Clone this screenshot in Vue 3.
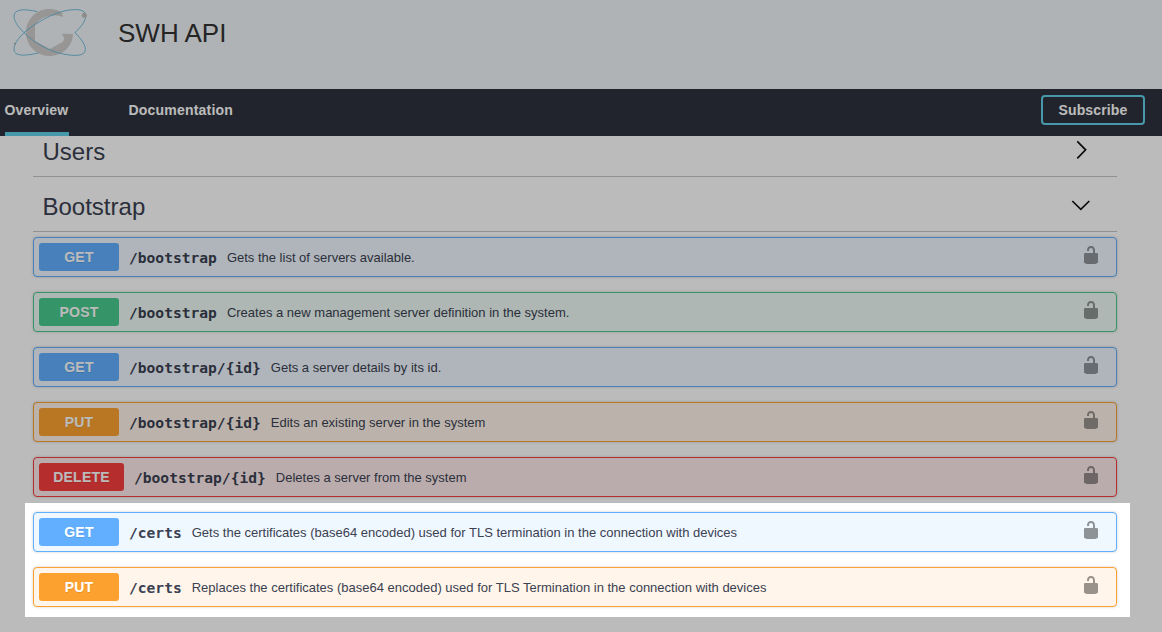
<script setup>
const operations = [
  { method: 'GET', path: '/bootstrap', text: 'Gets the list of servers available.' },
  { method: 'POST', path: '/bootstrap', text: 'Creates a new management server definition in the system.' },
  { method: 'GET', path: '/bootstrap/{id}', text: 'Gets a server details by its id.' },
  { method: 'PUT', path: '/bootstrap/{id}', text: 'Edits an existing server in the system' },
  { method: 'DELETE', path: '/bootstrap/{id}', text: 'Deletes a server from the system' },
  { method: 'GET', path: '/certs', text: 'Gets the certificates (base64 encoded) used for TLS termination in the connection with devices' },
  { method: 'PUT', path: '/certs', text: 'Replaces the certificates (base64 encoded) used for TLS Termination in the connection with devices' },
]
</script>

<template>
  <div class="page">
    <header class="top">
      <svg class="logo" viewBox="0 0 270 180" aria-hidden="true">
        <path fill="#cfcdcb" d="M189 51C181 47 166 45 150 47C132 50 116 59 105 75V122L149 147L189 125L193 115L185 101L219 102C218 140 187 168 148 168C108 168 78 136 78 97C78 58 109 27 148 27C163 27 177 31 187 39Z" />
        <g fill="none" stroke="#69b8d8" stroke-width="2.8">
          <path d="M115 159C75 168 42 170 42 147C42 134 52 118 72 98C100 74 155 39 202 31C235 26 257 29 257 47C257 62 246 78 225 98" />
          <path d="M112 35C76 26 42 26 42 48C42 61 51 78 72 98C101 127 148 155 190 162C226 169 256 169 256 148C256 135 246 119 225 98" />
        </g>
        <circle cx="253" cy="46" r="7.5" fill="#c2bfbe" />
        <circle cx="45" cy="131" r="3.5" fill="#b5b5b5" />
      </svg>
      <h1>SWH API</h1>
    </header>
    <nav class="bar">
      <a class="tab active">Overview</a>
      <a class="tab">Documentation</a>
      <button class="subscribe">Subscribe</button>
    </nav>
    <main>
      <h2 class="users">Users
        <svg width="20" height="20" viewBox="0 0 20 20"><path d="M6.3 1.3L14.6 9.8L6.3 18.3" /></svg>
      </h2>
      <h2 class="bootstrap">Bootstrap
        <svg width="20" height="20" viewBox="0 0 20 20"><path d="M1.3 6L9.8 14.3L18.3 6" /></svg>
      </h2>
      <div class="ops">
        <div v-for="(op, i) in operations" :key="i" class="op" :class="op.method.toLowerCase()">
          <span class="method">{{ op.method }}</span>
          <span class="path">{{ op.path }}</span>
          <span class="text">{{ op.text }}</span>
          <svg class="lock" width="20" height="20" viewBox="0 0 20 20">
            <path d="M15.8 8H14V5.6C14 2.703 12.665 1 10 1 7.334 1 6 2.703 6 5.6V6h2v-.801C8 3.754 8.797 3 10 3c1.203 0 2 .754 2 2.199V8H4c-.553 0-1 .646-1 1.199V17c0 .549.428 1.139.951 1.307l1.197.387C5.672 18.861 6.55 19 7.1 19h5.8c.549 0 1.428-.139 1.951-.307l1.196-.387c.524-.167.953-.757.953-1.306V9.199C17 8.646 16.352 8 15.8 8z" />
          </svg>
        </div>
      </div>
    </main>
    <div class="spotlight"></div>
  </div>
</template>

<style>
body { margin: 0; overflow: hidden; }
</style>

<style scoped>
.page {
  position: relative;
  width: 1162px;
  height: 632px;
  overflow: hidden;
  background: #fff;
  color: #3b4151;
  font-family: "Liberation Sans", Arial, sans-serif;
}
.top {
  display: flex;
  height: 89px;
  background: #f0f5f9;
}
.logo { width: 90px; height: 60px; margin-right: 28px; }
h1 {
  margin: 0;
  font-size: 26px;
  font-weight: 400;
  line-height: 66px;
  color: #333;
}
.bar {
  display: flex;
  align-items: flex-start;
  height: 47px;
  padding: 0 17px 0 5px;
  box-sizing: border-box;
  background: #2e323d;
  font-size: 14px;
  font-weight: 700;
  color: #fff;
}
.tab {
  height: 47px;
  box-sizing: border-box;
  margin-right: 60px;
  line-height: 42px;
  letter-spacing: 0.2px;
  text-indent: -0.5px;
}
.active { width: 64px; border-bottom: 4px solid #62d0e9; }
.subscribe {
  width: 104px;
  height: 30px;
  margin: 6px 0 0 auto;
  padding: 0;
  border: 2px solid #62d0e9;
  border-radius: 4px;
  background: transparent;
  color: #fff;
  font: 700 14px "Liberation Sans", Arial, sans-serif;
  letter-spacing: 0.15px;
}
main { width: 1084px; padding-left: 33px; }
h2 {
  display: flex;
  align-items: center;
  justify-content: space-between;
  height: 55px;
  margin: 0;
  padding: 0 26px 0 9.5px;
  box-sizing: border-box;
  border-bottom: 1px solid #c4c6cb;
  font-size: 24px;
  font-weight: 400;
  line-height: 30px;
}
.users { height: 41px; padding-bottom: 9px; }
.bootstrap { padding-top: 6px; }
h2 svg { fill: none; stroke: #111; stroke-width: 1.7; margin-bottom: 4px; }
.ops {
  display: flex;
  flex-direction: column;
  gap: 15px;
  padding-top: 5px;
}
.op {
  display: flex;
  align-items: center;
  height: 40px;
  box-sizing: border-box;
  padding: 0 15px 0 5px;
  border: 1px solid var(--c);
  border-radius: 4px;
  background: var(--b);
  box-shadow: 0 0 3px rgba(0, 0, 0, 0.19);
}
.get { --c: #61affe; --b: #eff7ff; }
.post { --c: #49cc90; --b: #edfaf4; }
.put { --c: #fca130; --b: #fff5ea; }
.delete { --c: #f93e3e; --b: #feebeb; }
.method {
  min-width: 80px;
  box-sizing: border-box;
  padding: 0 14px;
  border-radius: 3px;
  background: var(--c);
  color: #fff;
  font-size: 14px;
  font-weight: 700;
  line-height: 28px;
  letter-spacing: 0.25px;
  text-align: center;
  text-shadow: 0 1px 0 rgba(0, 0, 0, 0.1);
}
.delete .method { width: 85px; }
.path {
  padding: 0 10px;
  font: 700 14.6px "DejaVu Sans Mono", monospace;
}
.text { font-size: 13px; }
.lock { margin: -4px 0 0 auto; fill: #000; opacity: 0.4; }
/* Dims everything outside the highlighted operations */
.spotlight {
  position: absolute;
  left: 25px;
  top: 503px;
  width: 1105px;
  height: 114px;
  box-shadow: 0 0 0 1300px rgba(0, 0, 0, 0.265);
  pointer-events: none;
}
</style>
